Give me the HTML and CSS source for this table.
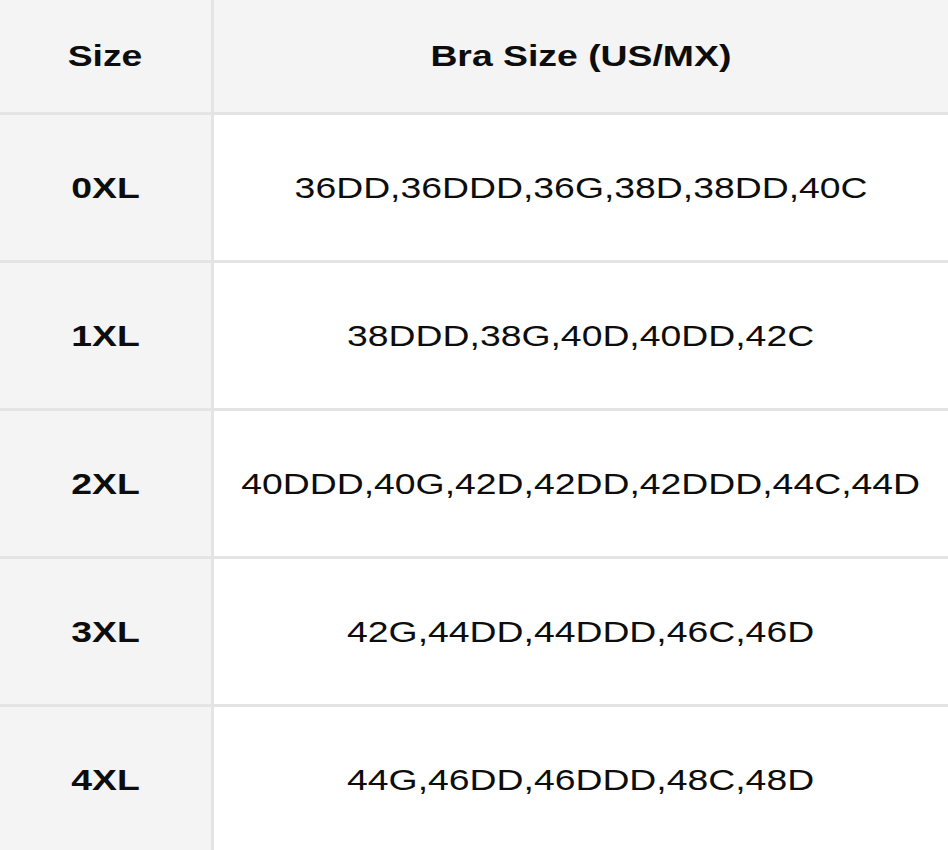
FILE: index.html
```html
<!DOCTYPE html>
<html>
<head>
<meta charset="utf-8">
<link rel="stylesheet" href="styles.css">
</head>
<body>
<div class="chart">
  <div class="cell head"><span class="t">Size</span></div>
  <div class="cell head"><span class="t">Bra Size (US/MX)</span></div>

  <div class="cell label"><span class="t">0XL</span></div>
  <div class="cell value"><span class="t">36DD,36DDD,36G,38D,38DD,40C</span></div>

  <div class="cell label"><span class="t">1XL</span></div>
  <div class="cell value"><span class="t">38DDD,38G,40D,40DD,42C</span></div>

  <div class="cell label"><span class="t">2XL</span></div>
  <div class="cell value"><span class="t">40DDD,40G,42D,42DD,42DDD,44C,44D</span></div>

  <div class="cell label"><span class="t">3XL</span></div>
  <div class="cell value"><span class="t">42G,44DD,44DDD,46C,46D</span></div>

  <div class="cell label"><span class="t">4XL</span></div>
  <div class="cell value"><span class="t">44G,46DD,46DDD,48C,48D</span></div>
</div>
</body>
</html>
```
FILE: styles.css
```css
html, body {
  margin: 0;
  padding: 0;
  background: #ffffff;
  overflow: hidden;
}

body {
  width: 948px;
  height: 850px;
  font-family: "Liberation Sans", Arial, sans-serif;
  color: #0d0d0d;
}

.chart {
  display: grid;
  grid-template-columns: 211px 1fr;
  grid-template-rows: 112px repeat(5, 145px);
  gap: 3px;
  background: #e4e4e4;
  width: 948px;
}

.cell {
  display: flex;
  align-items: center;
  justify-content: center;
  font-size: 30px;
  white-space: nowrap;
}

.head,
.label {
  background: #f4f4f4;
  font-weight: bold;
}

.value {
  background: #ffffff;
  font-weight: normal;
}

.t {
  display: inline-block;
  transform: scaleX(1.245);
  line-height: 1;
}
```
